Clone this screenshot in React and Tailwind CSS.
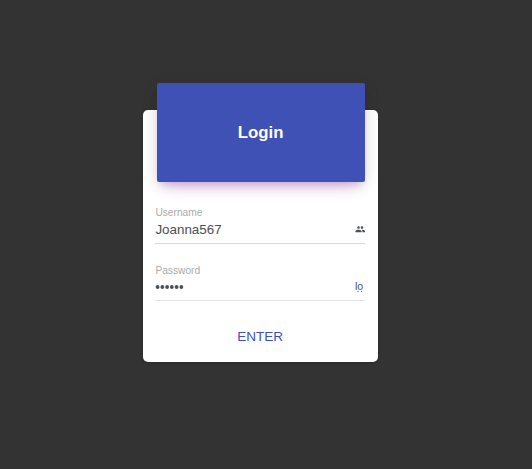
import React from "react";
import { MdPeople } from "react-icons/md";

function Field({ label, value, icon, className, rowClass, valueClass }) {
  return (
    <div className={`flex flex-col border-b ${className}`}>
      <label className="h-4 text-[10.2px] leading-4 text-[#aaaaaa]">{label}</label>
      <div className={`flex items-center justify-between ${rowClass}`}>
        <span className={valueClass}>{value}</span>
        {icon}
      </div>
    </div>
  );
}

function PasswordDots() {
  return (
    <svg viewBox="0 0 30 6" className="block h-[6px] w-[30px] fill-[#495057]">
      {[2.6, 7.35, 12.1, 16.85, 21.6, 26.35].map((x) => (
        <circle key={x} cx={x} cy="3" r="1.9" />
      ))}
    </svg>
  );
}

function LockGlyph() {
  return (
    <span className="flex w-[10px] flex-col text-[10.5px] leading-[11px] text-[#495057]">
      <span>lo</span>
      <span className="-mt-px ml-[2px] flex gap-[2px]">
        <span className="h-px w-[2px] bg-[#a0a5aa]" />
        <span className="h-px w-px bg-[#6b7278]" />
      </span>
    </span>
  );
}

export default function App() {
  return (
    <main className="h-[469px] w-[532px] bg-[#333333] pl-[143px] pt-[110px] font-['Liberation_Sans',Arial,sans-serif]">
      <form className="flex h-[251.5px] w-[235px] flex-col rounded-[5px] bg-white pl-[12.4px] pr-[13px] shadow-[0_1px_3px_rgba(0,0,0,0.2)]">
        <header className="ml-[1.2px] mr-[0.4px] -mt-[27px] flex h-[98.5px] shrink-0 items-center justify-center rounded-[2px] bg-[#3f51b5] pt-px shadow-[0_10px_16px_-8px_rgba(156,39,176,0.28),0_3px_16px_rgba(0,0,0,0.12),0_6px_7px_-4px_rgba(156,39,176,0.2)]">
          <h1 className="text-[16.8px] font-bold leading-5 text-white">Login</h1>
        </header>
        <Field
          label="Username"
          value="Joanna567"
          className="mt-[23.5px] h-[39px] border-[#d9d9d9]"
          rowClass="h-[18px]"
          valueClass="text-[13.4px] leading-[18px] text-[#495057]"
          icon={<MdPeople className="-mt-px size-[10.5px] text-[#495057]" />}
        />
        <Field
          label="Password"
          value={<PasswordDots />}
          className="mt-[18.5px] h-[38.5px] border-[#e6e6e6]"
          rowClass="h-4"
          valueClass=""
          icon={<LockGlyph />}
        />
        <button type="button" className="mt-[27px] h-[18px] self-center text-[13.5px] leading-[18px] text-[#3f51b5]">
          ENTER
        </button>
      </form>
    </main>
  );
}
